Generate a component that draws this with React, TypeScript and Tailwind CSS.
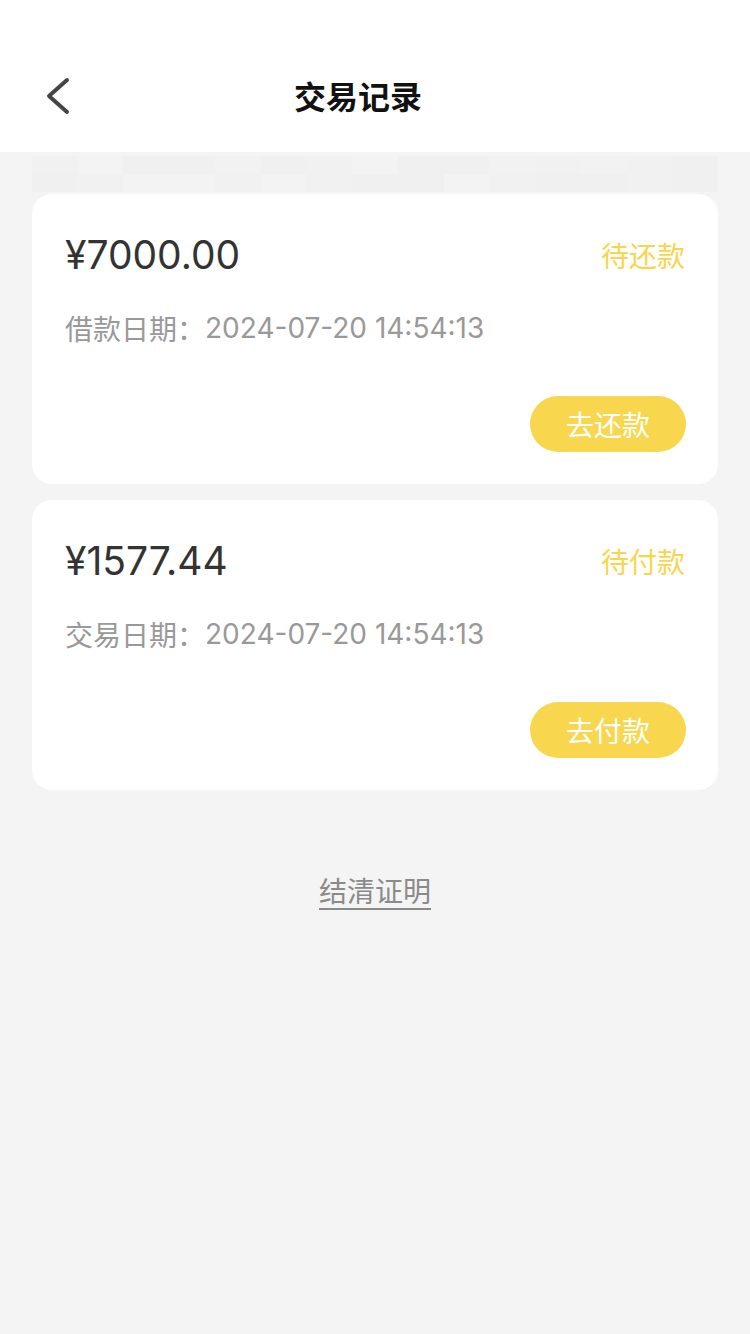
import React from "react";

const font = { fontFamily: '"Noto Sans CJK SC", "Noto Sans", sans-serif' };
const num = { fontFamily: 'Inter, "Noto Sans CJK SC", sans-serif' };

const records = [
  { amount: "¥7000.00", status: "待还款", label: "借款日期", date: "2024-07-20 14:54:13", action: "去还款" },
  { amount: "¥1577.44", status: "待付款", label: "交易日期", date: "2024-07-20 14:54:13", action: "去付款" },
];

// blurred strip under the header (mosaic of faint blocks)
const mosaicTop = ["bg-[#f1f1f1]", "bg-[#f3f3f3]", "bg-[#f0f0f0]", "bg-[#f0f0f0]", "bg-[#f2f2f2]", "bg-[#f0f0f0]", "bg-[#f1f1f1]", "bg-[#f3f3f3]", "bg-[#f0f0f0]", "bg-[#f0f0f0]", "bg-[#f2f2f2]", "bg-[#f1f1f1]", "bg-[#f2f2f2]", "bg-[#f1f1f1]", "bg-[#f0f0f0]"];
const mosaicBottom = ["bg-[#f0f0f0]", "bg-[#f1f1f1]", "bg-[#f3f3f3]", "bg-[#f3f3f3]", "bg-[#f1f1f1]", "bg-[#f3f3f3]", "bg-[#f1f1f1]", "bg-[#f0f0f0]", "bg-[#f0f0f0]", "bg-[#f3f3f3]", "bg-[#f1f1f1]", "bg-[#f0f0f0]", "bg-[#f0f0f0]", "bg-[#f1f1f1]", "bg-[#f0f0f0]"];

export default function App() {
  return (
    <div className="w-[750px] min-h-[1334px] bg-[#f4f4f4]" style={font}>
      <header className="relative h-[152px] bg-white flex items-end justify-center pb-[37px] pr-[34px]">
        <button className="absolute left-[38px] top-[74px] w-[40px] h-[44px] flex items-center justify-center">
          <svg width="30" height="40" viewBox="0 0 30 40" fill="none">
            <path d="M24 4 L6 20 L24 36" stroke="#444" strokeWidth="4" strokeLinecap="round" strokeLinejoin="round" />
          </svg>
        </button>
        <h1 className="text-[32px] leading-[40px] font-bold text-[#111]">交易记录</h1>
      </header>

      <div className="px-[32px]">
        <div className="h-[42px] flex flex-col">
          <div className="flex h-[18px] mt-[4px]">
            {mosaicTop.map((c, i) => (
              <div key={i} className={`flex-1 ${c}`} />
            ))}
          </div>
          <div className="flex h-[18px]">
            {mosaicBottom.map((c, i) => (
              <div key={i} className={`flex-1 ${c}`} />
            ))}
          </div>
        </div>

        <div className="flex flex-col gap-[16px]">
          {records.map((r) => (
            <div key={r.amount} className="bg-white rounded-[20px] px-[33px] pt-[37px] pb-[32px]">
              <div className="flex items-center justify-between h-[48px]">
                <span className="text-[39px] text-[#333]" style={num}>{r.amount}</span>
                <span className="text-[28px] text-[#f8d54c]">{r.status}</span>
              </div>
              <div className="mt-[29px] h-[40px] flex items-center text-[28px] text-[#999]">
                {r.label}：<span style={num}>{r.date}</span>
              </div>
              <div className="mt-[48px] flex justify-end -mr-[1px]">
                <button className="w-[156px] h-[56px] rounded-full bg-[#f8d74f] text-white text-[28px]">
                  {r.action}
                </button>
              </div>
            </div>
          ))}
        </div>

        <div className="mt-[80px] flex justify-center">
          <span className="text-[28px] leading-[40px] text-[#8a8a8a] underline underline-offset-[6px]">结清证明</span>
        </div>
      </div>
    </div>
  );
}
